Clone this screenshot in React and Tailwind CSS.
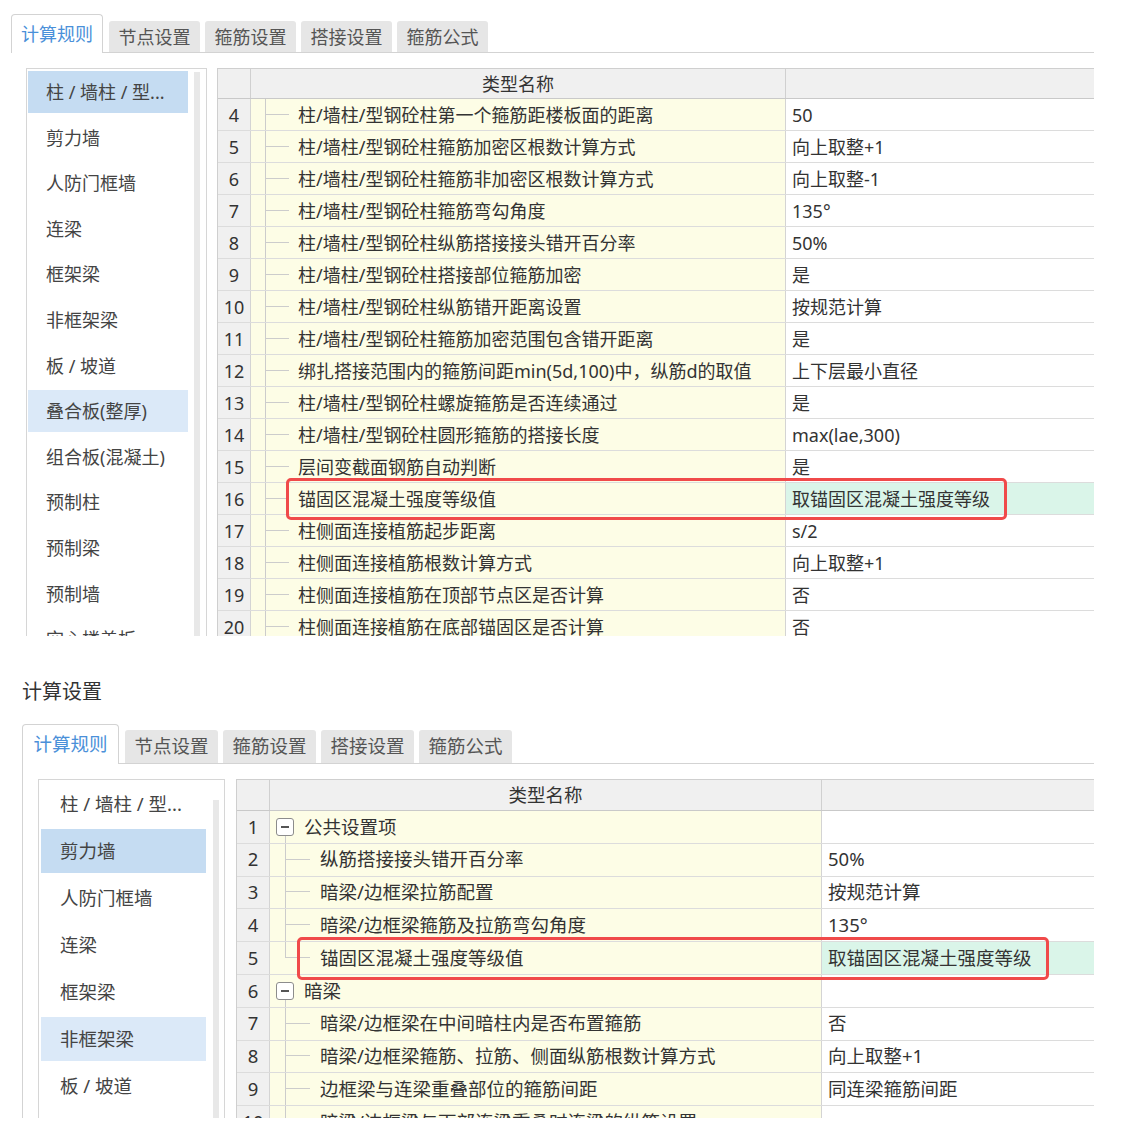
import React from 'react';

const font = "font-['Noto_Sans','Noto_Sans_CJK_SC',sans-serif]";

const tabs = ['计算规则', '节点设置', '箍筋设置', '搭接设置', '箍筋公式'];

// two sizes of the same settings panel
const sizes = {
  top: {
    wrap: 'ml-[11px] pt-[14px] h-[636px] w-[1083px] text-[18px]',
    tabRow: 'h-[39px]',
    tabActive: 'w-[92px] h-[39px] mr-[1px]',
    tabIdle: 'w-[91px] h-[31px]',
    body: 'pt-[15px] pl-[15px] gap-[10px]',
    side: 'w-[181px] pl-[1px] pr-[6px]',
    list: 'w-[160px] pt-[2px]',
    item: 'h-[42px] mb-[3.6px] pl-[18px]',
    scroll: 'ml-[6px] mt-[3px]',
    head: 'h-[30px]',
    row: 'h-[32px]',
    nameW: 'w-[535px]',
    mark: 'left-[68px] top-[-5px] w-[721px] h-[42px]',
    branch: 'ml-[14px] w-[24px]',
    label: 'pl-[9px]',
  },
  bottom: {
    wrap: 'ml-[22px] h-[394px] w-[1072px] text-[18.5px]',
    tabRow: 'h-[40px]',
    tabActive: 'w-[97px] h-[40px] mr-[1px]',
    tabIdle: 'w-[93px] h-[33px]',
    body: 'pt-[15px] pl-[15px] gap-[11px] border-l border-[#d3d3d3]',
    side: 'w-[187px] pl-[2px] pr-[5px]',
    list: 'w-[165px] pt-[2px]',
    item: 'h-[44px] mb-[3px] pl-[19px]',
    scroll: 'ml-[7px] mt-[20px]',
    head: 'h-[31px]',
    row: 'h-[32.8px]',
    nameW: 'w-[552px]',
    mark: 'left-[60px] top-[-5px] w-[752px] h-[43px]',
    branch: 'ml-[15px] w-[25px]',
    label: 'pl-[10px]',
  },
};

const topSide = [
  '柱 / 墙柱 / 型...', '剪力墙', '人防门框墙', '连梁', '框架梁', '非框架梁', '板 / 坡道',
  '叠合板(整厚)', '组合板(混凝土)', '预制柱', '预制梁', '预制墙', '空心楼盖板',
];

const bottomSide = [
  '柱 / 墙柱 / 型...', '剪力墙', '人防门框墙', '连梁', '框架梁', '非框架梁', '板 / 坡道', '叠合板(整厚)',
];

const topRows = [
  { n: 4, name: '柱/墙柱/型钢砼柱第一个箍筋距楼板面的距离', value: '50' },
  { n: 5, name: '柱/墙柱/型钢砼柱箍筋加密区根数计算方式', value: '向上取整+1' },
  { n: 6, name: '柱/墙柱/型钢砼柱箍筋非加密区根数计算方式', value: '向上取整-1' },
  { n: 7, name: '柱/墙柱/型钢砼柱箍筋弯勾角度', value: '135°' },
  { n: 8, name: '柱/墙柱/型钢砼柱纵筋搭接接头错开百分率', value: '50%' },
  { n: 9, name: '柱/墙柱/型钢砼柱搭接部位箍筋加密', value: '是' },
  { n: 10, name: '柱/墙柱/型钢砼柱纵筋错开距离设置', value: '按规范计算' },
  { n: 11, name: '柱/墙柱/型钢砼柱箍筋加密范围包含错开距离', value: '是' },
  { n: 12, name: '绑扎搭接范围内的箍筋间距min(5d,100)中，纵筋d的取值', value: '上下层最小直径' },
  { n: 13, name: '柱/墙柱/型钢砼柱螺旋箍筋是否连续通过', value: '是' },
  { n: 14, name: '柱/墙柱/型钢砼柱圆形箍筋的搭接长度', value: 'max(lae,300)' },
  { n: 15, name: '层间变截面钢筋自动判断', value: '是' },
  { n: 16, name: '锚固区混凝土强度等级值', value: '取锚固区混凝土强度等级', mark: true },
  { n: 17, name: '柱侧面连接植筋起步距离', value: 's/2' },
  { n: 18, name: '柱侧面连接植筋根数计算方式', value: '向上取整+1' },
  { n: 19, name: '柱侧面连接植筋在顶部节点区是否计算', value: '否' },
  { n: 20, name: '柱侧面连接植筋在底部锚固区是否计算', value: '否' },
];

const bottomRows = [
  { n: 1, name: '公共设置项', value: '', group: true },
  { n: 2, name: '纵筋搭接接头错开百分率', value: '50%' },
  { n: 3, name: '暗梁/边框梁拉筋配置', value: '按规范计算' },
  { n: 4, name: '暗梁/边框梁箍筋及拉筋弯勾角度', value: '135°' },
  { n: 5, name: '锚固区混凝土强度等级值', value: '取锚固区混凝土强度等级', mark: true, last: true },
  { n: 6, name: '暗梁', value: '', group: true },
  { n: 7, name: '暗梁/边框梁在中间暗柱内是否布置箍筋', value: '否' },
  { n: 8, name: '暗梁/边框梁箍筋、拉筋、侧面纵筋根数计算方式', value: '向上取整+1' },
  { n: 9, name: '边框梁与连梁重叠部位的箍筋间距', value: '同连梁箍筋间距' },
  { n: 10, name: '暗梁/边框梁与下部连梁重叠时连梁的纵筋设置', value: '' },
];

function Tabs({ v }) {
  return (
    <div className={`flex items-end gap-[5px] border-b border-[#d3d3d3] ${v.tabRow}`}>
      {tabs.map((t, i) =>
        i === 0 ? (
          <div
            key={t}
            className={`-mb-px flex items-center justify-center rounded-t-[4px] border border-b-0 border-[#d3d3d3] bg-white text-[#4a90d9] ${v.tabActive}`}
          >
            {t}
          </div>
        ) : (
          <div
            key={t}
            className={`flex items-center justify-center rounded-t-[3px] bg-[#e6e6e6] text-[#555] ${v.tabIdle}`}
          >
            {t}
          </div>
        )
      )}
    </div>
  );
}

function Sidebar({ v, items, selected, hover }) {
  return (
    <div className={`flex shrink-0 border border-[#d6d6d6] bg-white text-[#444] ${v.side}`}>
      <div className={`flex flex-col ${v.list}`}>
        {items.map((it, i) => (
          <div
            key={it}
            className={`flex shrink-0 items-center whitespace-nowrap ${v.item} ${
              i === selected ? 'bg-[#c5dcf2]' : i === hover ? 'bg-[#dbe9f8]' : ''
            }`}
          >
            {it}
          </div>
        ))}
      </div>
      <div className={`w-[6px] bg-[#e8e8e8] ${v.scroll}`} />
    </div>
  );
}

function MinusBox() {
  return (
    <div className="flex h-[18px] w-[18px] shrink-0 items-center justify-center rounded-[3px] border border-[#8c8c8c] bg-white">
      <div className="h-[1.5px] w-[8px] bg-[#555]" />
    </div>
  );
}

function NameCell({ v, r }) {
  if (r.group) {
    return (
      <>
        <div className="ml-[6px] flex w-[18px] flex-col items-center">
          <div className="flex-1" />
          <MinusBox />
          <div className="w-px flex-1 bg-[#cccccc]" />
        </div>
        <div className="flex items-center whitespace-nowrap pl-[10px]">{r.name}</div>
      </>
    );
  }
  return (
    <>
      {r.last ? (
        <div className={`flex flex-col ${v.branch}`}>
          <div className="h-1/2 border-b border-l border-[#cccccc]" />
        </div>
      ) : (
        <div className={`flex flex-col border-l border-[#cccccc] ${v.branch}`}>
          <div className="h-1/2 border-b border-[#cccccc]" />
        </div>
      )}
      <div className={`flex items-center whitespace-nowrap ${v.label}`}>{r.name}</div>
    </>
  );
}

function Grid({ v, rows }) {
  return (
    <div className="min-w-0 flex-1 border-l border-t border-[#cfcfcf] text-[#333]">
      <div className={`flex border-b border-[#c9c9c9] bg-[#f0f0f0] ${v.head}`}>
        <div className="w-[33px] shrink-0 border-r border-[#d0d0d0]" />
        <div className={`flex shrink-0 items-center justify-center border-r border-[#d0d0d0] ${v.nameW}`}>
          类型名称
        </div>
        <div className="flex-1" />
      </div>
      {rows.map((r) => (
        <div key={r.n} className={`relative flex border-b border-[#dcdcdc] ${v.row}`}>
          <div className="flex w-[33px] shrink-0 items-center justify-center border-r border-[#d4d4d4] bg-[#f0f0f0]">
            {r.n}
          </div>
          <div className={`flex shrink-0 items-stretch border-r border-[#d4d4d4] bg-[#fdfde6] ${v.nameW}`}>
            <NameCell v={v} r={r} />
          </div>
          <div
            className={`flex flex-1 items-center whitespace-nowrap pl-[6px] ${
              r.mark ? 'bg-[#daf5e9]' : 'bg-white'
            }`}
          >
            {r.value}
          </div>
          {r.mark && (
            <div
              className={`pointer-events-none absolute z-10 rounded-[5px] border-[3px] border-[#f04a4a] ${v.mark}`}
            />
          )}
        </div>
      ))}
    </div>
  );
}

function Panel({ v, side, selected, hover, rows }) {
  return (
    <section className={`overflow-hidden ${v.wrap}`}>
      <Tabs v={v} />
      <div className={`flex ${v.body}`}>
        <Sidebar v={v} items={side} selected={selected} hover={hover} />
        <Grid v={v} rows={rows} />
      </div>
    </section>
  );
}

export default function App() {
  return (
    <div className={`h-[1138px] w-[1146px] overflow-hidden bg-white leading-none ${font}`}>
      <Panel v={sizes.top} side={topSide} selected={0} hover={7} rows={topRows} />
      <div className="h-[88px] pl-[22px] pt-[42px] text-[20px] leading-[28px] text-[#333]">计算设置</div>
      <Panel v={sizes.bottom} side={bottomSide} selected={1} hover={5} rows={bottomRows} />
    </div>
  );
}
